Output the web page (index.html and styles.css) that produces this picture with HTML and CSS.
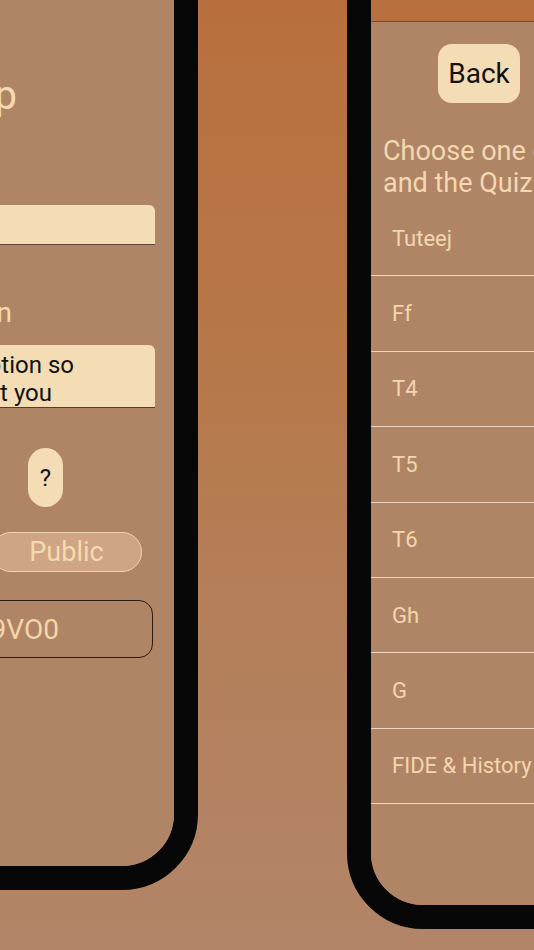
FILE: index.html
```html
<!DOCTYPE html>
<html>
<head>
<meta charset="utf-8">
<link rel="stylesheet" href="styles.css">
</head>
<body>
<div class="stage">
  <div class="phone phone-left">
    <div class="screen screen-left">
      <div class="title"><span>Create Group</span></div>
      <div class="input"></div>
      <div class="label"><span>Description</span></div>
      <div class="textarea">
        <div class="ta-line ta-line1"><span>Write a short description so</span></div>
        <div class="ta-line ta-line2"><span>people know what you</span></div>
      </div>
      <div class="help">?</div>
      <div class="toggle">Public</div>
      <div class="code"><span>A9VO0</span></div>
    </div>
  </div>
  <div class="phone phone-right">
    <div class="screen screen-right">
      <div class="appbar"></div>
      <div class="back">Back</div>
      <div class="heading">Choose one of the categories<br>and the Quiz will start</div>
      <ul class="list">
        <li>Tuteej</li>
        <li>Ff</li>
        <li>T4</li>
        <li>T5</li>
        <li>T6</li>
        <li>Gh</li>
        <li>G</li>
        <li>FIDE &amp; History</li>
      </ul>
    </div>
  </div>
</div>
</body>
</html>
```
FILE: styles.css
```css
html, body {
  margin: 0;
  padding: 0;
}
body {
  width: 534px;
  height: 950px;
  overflow: hidden;
  font-family: Roboto, "Noto Sans", sans-serif;
  background: linear-gradient(to bottom, #b86f3d 0%, #b77748 35%, #b47f5a 65%, #b28568 100%);
}
.stage {
  display: flex;
  align-items: flex-start;
  width: 534px;
  height: 950px;
  overflow: hidden;
}
.phone {
  flex-shrink: 0;
  box-sizing: border-box;
  border: 24px solid #070707;
  border-radius: 76px;
  overflow: hidden;
}
.phone-left {
  width: 420px;
  height: 990px;
  margin-left: -222px;
  margin-top: -100px;
}
.phone-right {
  width: 360px;
  height: 1029px;
  margin-left: 149px;
  margin-top: -100px;
}
.screen {
  width: 100%;
  height: 100%;
  background: #b08566;
  display: flex;
  flex-direction: column;
}
.screen-left {
  padding-top: 148px;
  box-sizing: border-box;
}
.title, .label, .ta-line {
  display: flex;
  justify-content: flex-end;
  white-space: nowrap;
}
.title span, .label span, .ta-line span {
  flex-shrink: 0;
}
.title {
  font-size: 40px;
  line-height: 48px;
  color: #f4dab0;
  padding-right: 157px;
}
.input {
  margin-top: 85px;
  margin-right: 19px;
  height: 40px;
  box-sizing: border-box;
  background: #f4dcb5;
  border-radius: 6px 6px 0 0;
  border-bottom: 1.5px solid #5f4a3a;
}
.label {
  margin-top: 51px;
  font-size: 28px;
  line-height: 34px;
  color: #f4dab0;
  padding-right: 162px;
}
.textarea {
  margin-top: 15px;
  margin-right: 19px;
  height: 63px;
  box-sizing: border-box;
  padding-top: 6px;
  background: #f4dcb5;
  border-radius: 6px 6px 0 0;
  border-bottom: 1.5px solid #4f3e31;
}
.ta-line {
  font-size: 24px;
  line-height: 28px;
  color: #111;
}
.ta-line1 { padding-right: 81px; }
.ta-line2 { padding-right: 103px; }
.help {
  align-self: flex-end;
  margin-top: 40px;
  margin-right: 111px;
  width: 35px;
  height: 59px;
  border-radius: 18px;
  background: #f4dcb5;
  color: #111;
  font-size: 24px;
  display: flex;
  align-items: center;
  justify-content: center;
}
.toggle {
  align-self: flex-end;
  margin-top: 25px;
  margin-right: 32px;
  width: 151px;
  height: 40px;
  box-sizing: border-box;
  border: 1.5px solid #f1d6ab;
  border-radius: 20px;
  background: #cfa584;
  color: #f4dab0;
  font-size: 27px;
  display: flex;
  align-items: center;
  justify-content: center;
}
.code {
  margin-top: 28px;
  margin-right: 21px;
  height: 58px;
  box-sizing: border-box;
  border: 1.5px solid #2a1a10;
  border-radius: 14px;
  display: flex;
  align-items: center;
  justify-content: flex-end;
  padding-right: 93px;
  color: #f2d5a9;
  font-size: 28px;
}
.appbar {
  flex-shrink: 0;
  height: 98px;
  box-sizing: border-box;
  background: #b8703f;
  border-bottom: 1px solid #7d4b2a;
}
.back {
  flex-shrink: 0;
  margin-top: 22px;
  margin-left: 67px;
  width: 82px;
  height: 59px;
  border-radius: 14px;
  background: #f4dcb5;
  color: #111;
  font-size: 28px;
  display: flex;
  align-items: center;
  justify-content: center;
}
.heading {
  margin-top: 32px;
  padding-left: 12px;
  font-size: 27px;
  line-height: 32px;
  color: #f3d8b2;
  white-space: nowrap;
}
.list {
  list-style: none;
  margin: 2px 0 0;
  padding: 0;
}
.list li {
  height: 75.4px;
  box-sizing: border-box;
  border-bottom: 1.5px solid #eed5c2;
  display: flex;
  align-items: center;
  padding-left: 21px;
  font-size: 22px;
  color: #f3d6ad;
  white-space: nowrap;
}
```
